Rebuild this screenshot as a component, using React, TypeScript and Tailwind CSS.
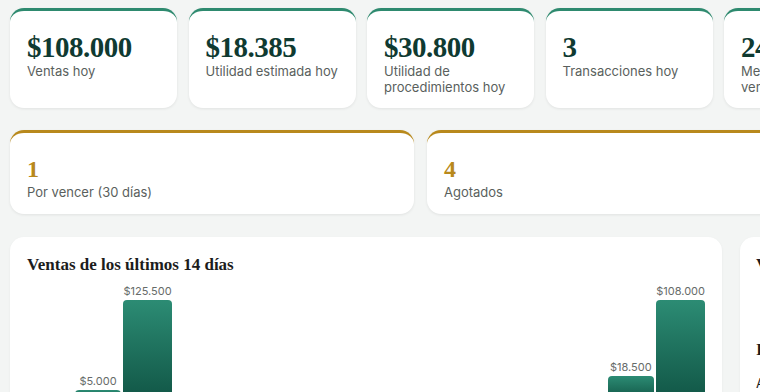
import React from 'react';

// ─── Data ────────────────────────────────────────────────────────────────────
const kpis = [
  { value: '$108.000', label: 'Ventas hoy' },
  { value: '$18.385', label: 'Utilidad estimada hoy' },
  { value: '$30.800', label: 'Utilidad de procedimientos hoy' },
  { value: '3', label: 'Transacciones hoy' },
  { value: '24', label: 'Medicamentos vendidos hoy' },
  { value: '$42.000', label: 'Ventas del mes' },
  { value: '12', label: 'Clientes atendidos' },
];

const alerts = [
  { value: '1', label: 'Por vencer (30 días)' },
  { value: '4', label: 'Agotados' },
  { value: '2', label: 'Stock bajo' },
];

// height in px of each bar (0 = no sales that day)
const sales = [
  { label: '', h: 0 },
  { label: '$5.000', h: 10 },
  { label: '$125.500', h: 100 },
  { label: '', h: 0 },
  { label: '', h: 0 },
  { label: '', h: 0 },
  { label: '', h: 0 },
  { label: '', h: 0 },
  { label: '', h: 0 },
  { label: '', h: 0 },
  { label: '', h: 0 },
  { label: '', h: 0 },
  { label: '$18.500', h: 24 },
  { label: '$108.000', h: 100 },
];

const serif = "font-['Liberation_Serif',serif]";

export default function App() {
  return (
    <div className="h-[392px] w-[760px] overflow-hidden bg-[#f3f5f4] font-['Inter',sans-serif]">
      <div className="w-[1256px] px-[10px] pt-[8px]">
        {/* KPI row */}
        <div className="grid grid-cols-[repeat(7,167px)] gap-x-[11.5px]">
          {kpis.map((k) => (
            <div
              key={k.label}
              className="h-[100px] rounded-[14px] border-t-[3px] border-[#2e8a6f] bg-white px-[17px] pt-[20px] shadow-[0_1px_3px_rgba(0,0,0,0.08)]"
            >
              <div className={`${serif} text-[29px] font-bold leading-[32px] tracking-[-0.5px] text-[#0f3a31]`}>
                {k.value}
              </div>
              <div className="text-[13px] leading-[16px] text-[#5a5f5d]">{k.label}</div>
            </div>
          ))}
        </div>

        {/* Alert row */}
        <div className="mt-[22px] grid grid-cols-[repeat(3,404px)] gap-x-[13px]">
          {alerts.map((a) => (
            <div
              key={a.label}
              className="h-[84px] rounded-[14px] border-t-[3px] border-[#b8891c] bg-white px-[17px] pt-[23px] shadow-[0_1px_3px_rgba(0,0,0,0.08)]"
            >
              <div className={`${serif} text-[24px] font-bold leading-[26px] text-[#b8891c]`}>{a.value}</div>
              <div className="mt-[2px] text-[13px] leading-[16px] text-[#5a5f5d]">{a.label}</div>
            </div>
          ))}
        </div>

        {/* Charts */}
        <div className="mt-[23px] flex gap-[18px]">
          <div className="h-[200px] w-[712px] rounded-[14px] bg-white px-[17px] pt-[18px] shadow-[0_1px_3px_rgba(0,0,0,0.05)]">
            <h2 className={`${serif} text-[17px] font-bold leading-[20px] text-[#1c1c1c]`}>
              Ventas de los últimos 14 días
            </h2>
            <div className="mt-[7px] flex h-[118px] items-end gap-[2.6px]">
              {sales.map((s, i) => (
                <div key={i} className="flex flex-1 flex-col items-center justify-end">
                  {s.h > 0 && (
                    <>
                      <span className="mb-[2px] text-[11px] leading-[13px] text-[#666b69]">{s.label}</span>
                      <div
                        className="w-full rounded-t-[4px] bg-gradient-to-b from-[#2c8c74] to-[#115646]"
                        style={{ height: s.h }}
                      />
                    </>
                  )}
                </div>
              ))}
            </div>
          </div>

          <div className="h-[200px] w-[480px] rounded-[14px] bg-white px-[16px] pt-[18px] shadow-[0_1px_3px_rgba(0,0,0,0.05)]">
            <h2 className={`${serif} text-[17px] font-bold leading-[20px] text-[#1c1c1c]`}>
              Ventas por método de pago
            </h2>
            <h2 className={`${serif} mt-[65px] text-[17px] font-bold leading-[20px] text-[#1c1c1c]`}>
              Inventario crítico
            </h2>
            <div className="mt-[15px] text-[13px] leading-[16px] text-[#1c1c1c]">Amoxicilina 500 mg</div>
          </div>
        </div>
      </div>
    </div>
  );
}
